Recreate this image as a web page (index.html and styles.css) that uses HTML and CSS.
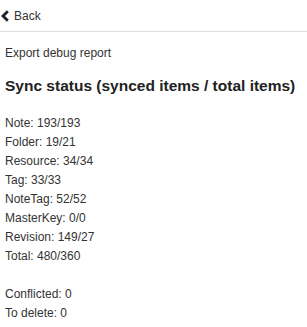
FILE: index.html
```html
<!DOCTYPE html>
<html lang="en">
<head>
    <meta charset="UTF-8">
    <meta name="viewport" content="width=device-width, initial-scale=1.0">
    <title>Status</title>
    <link rel="stylesheet" href="styles.css">
</head>
<body>
<header class="top-bar">
    <a href="#" class="back">
        <svg class="chevron" width="8" height="12" viewBox="0 0 8 12">
            <path d="M6.8 1.2 L2 6 L6.8 10.8" fill="none" stroke="#222" stroke-width="2.8"/>
        </svg>
        <span>Back</span>
    </a>
</header>

<main class="container">
    <a href="#" class="export">Export debug report</a>
    <h1>Sync status (synced items / total items)</h1>
    <div class="stats">
        <div class="row">Note: 193/193</div>
        <div class="row">Folder: 19/21</div>
        <div class="row">Resource: 34/34</div>
        <div class="row">Tag: 33/33</div>
        <div class="row">NoteTag: 52/52</div>
        <div class="row">MasterKey: 0/0</div>
        <div class="row">Revision: 149/27</div>
        <div class="row">Total: 480/360</div>
        <div class="row"></div>
        <div class="row">Conflicted: 0</div>
        <div class="row">To delete: 0</div>
    </div>
</main>
</body>
</html>
```

FILE: styles.css
```css
body {
    font-family: "Liberation Sans", Arial, sans-serif;
    margin: 0;
    padding: 0;
    background: #ffffff;
    color: #333333;
    font-size: 12px;
}

.top-bar {
    height: 32px;
    display: flex;
    align-items: center;
    border-bottom: 1px solid #dddddd;
    box-sizing: border-box;
}

.back {
    display: flex;
    align-items: center;
    gap: 5px;
    padding-left: 1px;
    color: #333333;
    text-decoration: none;
}

.chevron {
    display: block;
}

.container {
    padding: 0 5px;
}

.export {
    display: block;
    color: #333333;
    text-decoration: none;
    margin-top: 14px;
    line-height: 15px;
}

h1 {
    font-size: 15.5px;
    font-weight: bold;
    color: #222222;
    margin: 14px 0 17px;
    line-height: 22px;
    white-space: nowrap;
}

.row {
    height: 19px;
    line-height: 19px;
}
```
